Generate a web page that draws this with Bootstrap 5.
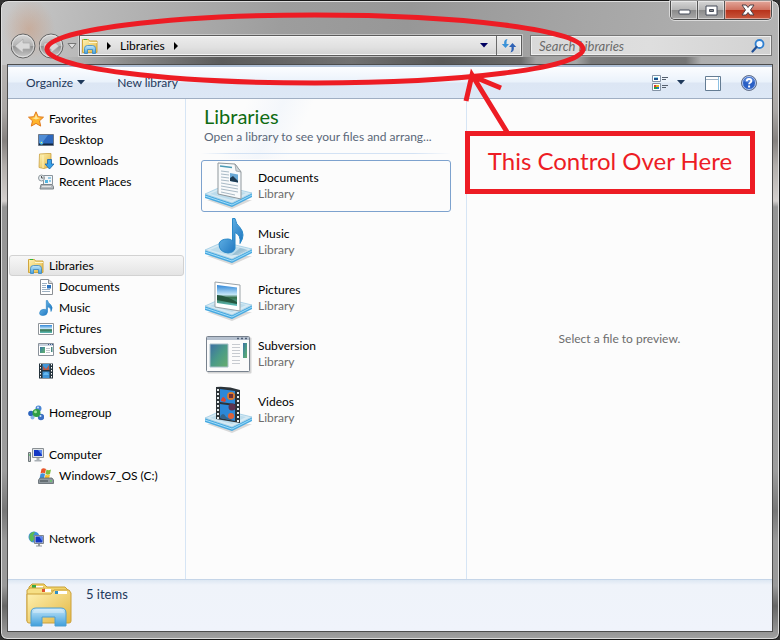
<!DOCTYPE html>
<html lang="en">
<head>
<meta charset="utf-8">
<meta name="viewport" content="width=device-width, initial-scale=1">
<title>Libraries</title>
<link href="https://cdn.jsdelivr.net/npm/bootstrap@5.3.0/dist/css/bootstrap.min.css" rel="stylesheet">
<style>
  body { font-family: Lato, "Open Sans", sans-serif; font-size: 12px; line-height: 16px; color: #000; background: #333; }
  button { font: inherit; border: 0; padding: 0; background: none; }
  .win { border: 1px solid #181818; border-radius: 8px 8px 7px 7px; padding: 0 6px 7px 6px;
    box-shadow: inset 0 0 0 1px #dedede;
    background:
      radial-gradient(ellipse 26px 30px at 28px 28px, rgba(205,140,100,.4), transparent),
      linear-gradient(to right, transparent 60px, rgba(60,60,60,.35) 130px, rgba(60,60,60,.7) 220px, rgba(80,80,80,.55) 350px, rgba(60,60,60,.7) 440px, rgba(70,70,70,.6) 520px, transparent 535px, transparent 575px, rgba(90,90,90,.6) 590px, rgba(80,80,80,.6) 685px, transparent 700px) 0 56px / 100% 8px no-repeat,
      linear-gradient(100deg, #c9c9c9 0, #b8b8b8 12%, #9d9d9d 36%, #979797 52%, #a6a6a6 75%, #b4b4b4 100%) 0 0 / 100% 64px no-repeat,
      linear-gradient(#b8b5b3 64px, #aaa7a5 110px, #85817f 140px, #b2aeab 165px, #d3cfcd 200px, #959595 206px, #9d9d9d 470px, #777 510px, #9a9a9a 540px, #9a9a9a 585px, #666 605px, #a2a2a2 100%); }
  .titlebar { height: 34px; padding-right: 1px; }
  .capbtns { height: 19px; border: 1px solid #4a4a4a; border-top: 0; border-radius: 0 0 5px 5px; overflow: hidden; box-shadow: 0 0 0 1px rgba(255,255,255,.55); }
  .capbtn { display: flex; align-items: center; justify-content: center; width: 27px; height: 18px;
    background: linear-gradient(#d5d5d5, #b5b5b5 48%, #8b8b8b 52%, #a9a9a9); border-right: 1px solid #555; box-shadow: inset 0 0 0 1px rgba(255,255,255,.45); }
  .capbtn.closebtn { width: 46px; border-right: 0; background: linear-gradient(#e3a79b, #cf7362 48%, #b8331b 52%, #c9583e); }
  .addrrow { height: 21px; margin-bottom: 8px; }
  .arrowbtn { width: 28px; height: 28px; }
  .histbtn { width: 12px; }
  .addr { height: 21px; border: 1px solid #5c5c5c; background: linear-gradient(#ececec, #e0e0e0 60%, #d2d2d2); box-shadow: inset 0 0 0 1px #f6f6f6, 0 0 0 1px rgba(230,230,230,.5); padding-left: 2px; }
  .refresh { width: 25px; height: 19px; border-left: 1px solid #6a6a6a; }
  .searchbox { width: 242px; height: 21px; border: 1px solid #777; background: linear-gradient(90deg, #d9d9d9, #dedede 50%, #d2d2d2); box-shadow: inset 0 0 0 1px #efefef; padding: 0 6px 0 8px; margin-right: 1px; }
  .searchbox input { min-width: 0; border: 0; outline: 0; padding: 0; background: none; font-size: 13px; font-style: italic; color: #555; line-height: 16px; }
  .searchbox input::placeholder { color: #6b6b6b; opacity: 1; }
  .client { border: 1px solid #4d4d4d; background: #fcfcfc; }
  .cmdbar { height: 34px; border-bottom: 1px solid #a0afc3; border-top: 2px solid #aebfd6; padding: 0 15px 0 18px;
    background: linear-gradient(#fcfdff, #eaf2fb 48%, #dce6f4 52%, #dde8f6); }
  .cmdbar button { color: #1e395b; }
  .treepane { width: 178px; flex: none; border-right: 1px solid #d6e5f5; padding: 9px 1px 0 1px; }
  .tree { display: flex; align-items: center; gap: 5px; height: 21px; padding: 0 0 0 18px; border: 1px solid transparent; color: #000; text-decoration: none; white-space: nowrap; }
  .tree.kid { padding-left: 28px; }
  .tree.active { border-color: #d2d2d2; border-radius: 3px; background: linear-gradient(#f7f7f7, #e4e4e4); }
  .gap1 { margin-bottom: 21px; }
  .gap2 { margin-bottom: 42px; }
  .gap3 { margin-bottom: 63px; }
  .listpane { width: 281px; flex: none; border-right: 1px solid #d6e5f5; padding: 5px 15px 0 15px;
    background: linear-gradient(115deg, transparent 20%, rgba(225,235,250,.3) 32%, transparent 42%) 0 0 / 100% 60px no-repeat; }
  .listpane h1 { font-size: 20px; line-height: 24px; font-weight: 400; color: #0f6b12; margin: 0 3px; }
  .subline { color: #5a6779; line-height: 18px; margin: 0 3px; padding-bottom: 7px; }
  .rule { height: 1px; margin-bottom: 6px; background: linear-gradient(90deg, transparent, #d3e2f4 12%, #d3e2f4 85%, transparent); }
  .lib { display: flex; align-items: center; gap: 5px; height: 52px; padding-left: 3px; border: 1px solid transparent; border-radius: 3px; color: #000; text-decoration: none; }
  .lib.focused { border-color: #7da2ce; }
  .lib small { display: block; font-size: 12px; color: #6d6d6d; }
  .preview { color: #6d6d6d; }
  .details { height: 52px; border-top: 1px solid #c5d5e8; background: linear-gradient(#dde7f3, #eff3fa 5px, #f0f3fb); color: #1e395b; padding: 0 0 0 18px; gap: 14px; }
  .details span { font-size: 13px; padding-top: 6px; }
  .overlay { position: absolute; left: 0; top: 0; pointer-events: none; }
  .callout { position: absolute; left: 465px; top: 131px; width: 290px; height: 63px; padding-bottom: 4px; border: 5px solid #ed1c24; background: #fcfcfc; color: #ed1c24; font-size: 24px; line-height: 28px; white-space: nowrap; }
</style>
</head>
<body class="position-relative">
<svg width="0" height="0" class="position-absolute" aria-hidden="true">
  <defs>
    <linearGradient id="gold" x1="0" y1="0" x2="1" y2="1"><stop offset="0" stop-color="#fff3b4"/><stop offset="1" stop-color="#e3b643"/></linearGradient>
    <linearGradient id="blue" x1="0" y1="0" x2="0" y2="1"><stop offset="0" stop-color="#c5e7fa"/><stop offset="1" stop-color="#3f9fdc"/></linearGradient>
    <linearGradient id="note" x1="0" y1="0" x2="1" y2="1"><stop offset="0" stop-color="#7fcbf5"/><stop offset="1" stop-color="#0d66b5"/></linearGradient>
    <linearGradient id="orb" x1="0" y1="0" x2="0" y2="1"><stop offset="0" stop-color="#d8d8d8"/><stop offset=".5" stop-color="#b1b1b1"/><stop offset=".52" stop-color="#929292"/><stop offset="1" stop-color="#cdcdcd"/></linearGradient>
    <linearGradient id="land" x1="0" y1="0" x2="0" y2="1"><stop offset="0" stop-color="#2f86d8"/><stop offset=".45" stop-color="#c3e5f7"/><stop offset=".6" stop-color="#35704a"/><stop offset="1" stop-color="#5fc0bf"/></linearGradient>
    <linearGradient id="field" x1="0" y1="0" x2="1" y2="1"><stop offset="0" stop-color="#3c6ea5"/><stop offset=".5" stop-color="#4a9a88"/><stop offset="1" stop-color="#68ae6c"/></linearGradient>
    <symbol id="i-lib" viewBox="0 0 16 16"><path d="M.5 1.500h6l1 1.500h7.500v11.500H.5z" fill="url(#gold)" stroke="#d0a63d"/><path d="M2 1.500h3" stroke="#35b435"/><path d="M7 4.500h8" stroke="#fff7d0"/><path d="M2.500 15.500v-5q0-3 3-3h5q3 0 3 3v5h-3v-4h-5v4z" fill="url(#blue)" stroke="#3787c4" stroke-width=".8"/></symbol>
    <symbol id="i-stand" viewBox="0 0 48 48"><path d="M2 38l25 9 20-9z" fill="#888" opacity=".3"/><path d="M0 32v4l27 9 20-10v-4L27 41z" fill="#48a9e0"/><path d="M0 34l27 9 20-10" stroke="#9fdcf9" fill="none"/><path d="M0 32l18-8 29 7-20 10z" fill="#d5e9f3" stroke="#9ccae3" stroke-width=".8"/><path d="M5 32l14-6 22 5-14 7z" fill="#bcdcec"/></symbol>
  </defs>
</svg>

<div class="win min-vh-100 d-flex flex-column">
  <header>
    <div class="titlebar d-flex justify-content-end">
      <div class="capbtns d-flex">
        <button class="capbtn" aria-label="Minimize"><svg width="13" height="10"><rect x="1" y="5" width="11" height="4" rx="1" fill="#fff" stroke="#444b59"/></svg></button>
        <button class="capbtn" aria-label="Maximize"><svg width="13" height="11"><path d="M1 1h11v9H1zM4.500 4.500v2h4v-2z" fill="#fff" stroke="#444b59" fill-rule="evenodd"/></svg></button>
        <button class="capbtn closebtn" aria-label="Close"><svg width="14" height="12"><path d="M1 1h4l2 2.500L9 1h4L9.500 6l3.500 5H9L7 8.500 5 11H1l3.500-5z" fill="#fff" stroke="#4c4047"/></svg></button>
      </div>
    </div>
    <div class="addrrow d-flex align-items-center">
      <div class="d-flex align-items-center ps-1">
        <button class="arrowbtn" aria-label="Back"><svg class="d-block" width="28" height="28"><circle cx="12" cy="14" r="12" fill="url(#orb)" stroke="#666"/><circle cx="12" cy="14" r="10.800" fill="none" stroke="#eee" opacity=".7"/><path d="M4 14l8-7v4h7v6h-7v4z" fill="#d9d9d9" stroke="#aaa" stroke-width=".7"/></svg></button>
        <button class="arrowbtn" aria-label="Forward"><svg class="d-block" width="28" height="28"><circle cx="12" cy="14" r="12" fill="url(#orb)" stroke="#666"/><circle cx="12" cy="14" r="10.800" fill="none" stroke="#eee" opacity=".7"/><path d="M20 14l-8-7v4H5v6h7v4z" fill="#d9d9d9" stroke="#aaa" stroke-width=".7"/></svg></button>
        <button class="histbtn d-flex" aria-label="Recent pages"><svg width="10" height="6"><path d="M1 .5h8L5 5.500z" fill="#ddd" stroke="#777"/></svg></button>
      </div>
      <div class="addr d-flex align-items-center flex-grow-1">
        <svg width="16" height="16"><use href="#i-lib"/></svg>
        <svg class="ms-2" width="6" height="8"><path d="M1 0l4 4-4 4z"/></svg>
        <button class="ms-2">Libraries</button>
        <svg class="ms-2" width="6" height="8"><path d="M1 0l4 4-4 4z"/></svg>
        <button class="ms-auto me-1 pe-1 d-flex" aria-label="Previous locations"><svg width="8" height="5"><path d="M0 0h8L4 4.500z" fill="#000060"/></svg></button>
        <button class="refresh d-flex align-items-center justify-content-center" aria-label="Refresh"><svg width="16" height="15"><path d="M6.500 1Q2.500 1.500 3.200 6H.8l3.700 4L8 6H5.500Q5 3 6.500 1z" fill="#3a92d8"/><path d="M9.500 14.500q4-1 3.300-5.500h2.400l-3.700-4L8 9h2.500q.5 3-1 5.500z" fill="#2e62b5"/></svg></button>
      </div>
      <label class="searchbox d-flex align-items-center ms-2">
        <input class="flex-grow-1" type="text" placeholder="Search Libraries" aria-label="Search Libraries">
        <svg width="14" height="14"><circle cx="8.500" cy="5" r="4" fill="#eef6ff" stroke="#2e7fd0" stroke-width="1.800"/><path d="M5.500 8L1.500 12.500" stroke="#204f95" stroke-width="2.200" stroke-linecap="round"/></svg>
      </label>
    </div>
  </header>

  <div class="client flex-grow-1 d-flex flex-column">
    <div class="cmdbar d-flex align-items-center">
      <button class="d-flex align-items-center gap-1">Organize <svg width="8" height="5"><path d="M0 0h8L4 4.500z" fill="#1e395b"/></svg></button>
      <button class="ms-4 ps-2">New library</button>
      <button class="ms-auto" aria-label="Change view"><svg width="17" height="16"><g fill="#fff" stroke="#8493a5"><path d="M.5.500h8v6h-8zM.5 8.500h8v7h-8z"/></g><path d="M2 3h4v2H2z" fill="#1c4f8a"/><path d="M2 2h4v1H2z" fill="#8dd8ee"/><path d="M2 10h2v2H2z" fill="#d33"/><path d="M4 10h3v2H4z" fill="#e6b31d"/><path d="M2 12h3v2H2z" fill="#2a9d45"/><path d="M5 12h2v2H5z" fill="#27c"/><path d="M10 2.500h6M10 4.500h4M10 10.500h6M10 12.500h4" stroke="#55606e"/></svg></button>
      <button class="ms-2 d-flex" aria-label="More views"><svg width="8" height="5"><path d="M0 0h8L4 4.500z" fill="#1e395b"/></svg></button>
      <button class="ms-3 ps-1" aria-label="Preview pane"><svg width="16" height="15" viewBox="0 0 16 15"><path d="M.5.500h15v14H.5z" fill="#fff" stroke="#647c93"/><path d="M1 3.500h12" stroke="#a3b4c4"/><path d="M13.500 1v13" stroke="#8cc0e2"/></svg></button>
      <button class="ms-3 ps-1" aria-label="Help"><svg width="16" height="16"><circle cx="8" cy="8" r="7.500" fill="#2a5fc5" stroke="#6a7488"/><circle cx="8" cy="8" r="6.500" fill="none" stroke="#b8cbee"/><path d="M3 6q1-3.500 5-3.500T13 6q-5 3-10 0z" fill="#7ea6ea" opacity=".6"/><path d="M5.800 6.300q0-2.300 2.300-2.300t2.200 2q0 1-1.200 1.800-1 .6-1 1.500" fill="none" stroke="#fff" stroke-width="1.800"/><path d="M7.100 10.500h2v2h-2z" fill="#fff"/></svg></button>
    </div>

    <div class="d-flex flex-grow-1">
      <nav class="treepane" aria-label="Folders">
        <a class="tree" href="#"><svg width="16" height="16"><path d="M8 .8l2.200 4.900 5.300.5-4 3.600 1.200 5.300L8 12.400l-4.700 2.700 1.200-5.300-4-3.600 5.300-.5z" fill="#ffb52c" stroke="#e07a1f"/><path d="M8 3l1.300 3.600 3 .3-4.300 1.600-4-1.600 2.800-.3z" fill="#ffe79a"/></svg>Favorites</a>
        <a class="tree kid" href="#"><svg width="16" height="16"><path d="M.5 2.500h15v11H.5z" fill="#2d68bd" stroke="#6c7787"/><path d="M1 3h9L4 11H1z" fill="#5f9de0" opacity=".7"/><path d="M1 11.500h14V13H1z" fill="#14283f"/><circle cx="3.500" cy="11" r="1.800" fill="#4fb8e6"/><path d="M3 10h1v1H3z" fill="#fe6"/></svg>Desktop</a>
        <a class="tree kid" href="#"><svg width="16" height="16"><path d="M1.500 1L9 .5h4v13L6 15.500l-5-1z" fill="url(#gold)" stroke="#caa142" stroke-width=".8"/><path d="M5 2v13" stroke="#fff4bd"/><path d="M9.500 6.500h4V11H16l-4.500 5L7 11h2.500z" fill="#38a0e8" stroke="#1c65a8" stroke-width=".8"/></svg>Downloads</a>
        <a class="tree kid" href="#"><svg width="16" height="16"><path d="M5.500 1.500h9v9h-9z" fill="#f3f6f8" stroke="#8a949c"/><path d="M7 6h3v3H7z" fill="#51b4df"/><path d="M10 4h3M11 7h2" stroke="#379bd0"/><path d="M3 10.500h11l1.500 2V15H2z" fill="#b4b9bd" stroke="#7d8489"/><path d="M4 12.500h9" stroke="#e4e4e4"/><circle cx="3.500" cy="4" r="3" fill="#e7edf0" stroke="#919a9f"/><path d="M3.500 2v2h2" fill="none" stroke="#555"/></svg>Recent Places</a>
        <div class="gap3"></div>
        <a class="tree active" href="#" aria-current="page"><svg width="16" height="16"><use href="#i-lib"/></svg>Libraries</a>
        <a class="tree kid" href="#"><svg width="16" height="16"><path d="M2.500.500h8l4 3.500v11.500h-12z" fill="#fff" stroke="#8b8f94"/><path d="M10.500.500v4h4" fill="#ddd" stroke="#8b8f94"/><path d="M4 4.500h5M4 6.500h4M4 8.500h4M4 10.500h8M4 12.500h8" stroke="#9cb0c2"/><path d="M9 6h4v3.500H9z" fill="#2a73c0"/></svg>Documents</a>
        <a class="tree kid" href="#"><svg width="16" height="16"><path d="M8.300.500h1.200Q10 3 12.500 4.500q3 3 .5 7 .6-3.500-3.500-5V12Q9 15.500 5 15.500t-3.300-3Q2 9.500 6 9.300q1.300 0 2.300.4z" fill="url(#note)" stroke="#2180c4" stroke-width=".6"/></svg>Music</a>
        <a class="tree kid" href="#"><svg width="16" height="16"><path d="M.5 2.500h15v11H.5z" fill="#fff" stroke="#8f9499"/><path d="M2 4h12v8H2z" fill="url(#land)"/></svg>Pictures</a>
        <a class="tree kid" href="#"><svg width="16" height="16"><path d="M.5 1.500h15v12H.5z" fill="#fff" stroke="#8b929b"/><path d="M1 2h14v2H1z" fill="#c9d2de"/><path d="M10 2.500h5" stroke="#35588b" stroke-dasharray="1 1"/><path d="M2 5h5v6H2z" fill="url(#field)"/><path d="M8 6.500h4M8 8.500h4M8 10.500h4" stroke="#c3c8ce"/><path d="M13 5h1.500v5H13z" fill="#4b8a80"/></svg>Subversion</a>
        <a class="tree kid" href="#"><svg width="16" height="16"><path d="M1 .5h14v15H1z" fill="#25333c"/><path d="M4.500 1h7v6h-7zM4.500 8.500h7v6.500h-7z" fill="#3f95d8"/><path d="M5 3l3 3 3-4v5H5z" fill="#b85a48"/><path d="M5 12q3-6 6 0z" fill="#64b8ef"/><path d="M2.500 1v14M13.500 1v14" stroke="#fff" stroke-dasharray="1.500 1.500"/></svg>Videos</a>
        <div class="gap1"></div>
        <a class="tree" href="#"><svg width="16" height="16"><circle cx="10.500" cy="3.500" r="3" fill="#4a86d4"/><circle cx="3" cy="8.500" r="2.800" fill="#2b64bd"/><circle cx="13" cy="12" r="3.200" fill="#3c6fc2"/><circle cx="4.500" cy="12.500" r="2" fill="#88b4e8"/><circle cx="8.500" cy="8" r="4" fill="#2f9d45"/><circle cx="7.500" cy="6.700" r="1.500" fill="#9fe39b"/><circle cx="10" cy="2.600" r="1" fill="#cfe4fb"/><circle cx="12.500" cy="11" r="1" fill="#cfe4fb"/></svg>Homegroup</a>
        <div class="gap1"></div>
        <a class="tree" href="#"><svg width="16" height="16"><path d="M.5 5.500h2v9h-2z" fill="#c3c8ca" stroke="#6d7679"/><path d="M1 8h1.500" stroke="#3b4"/><path d="M4.500 1.500h11v9h-11z" fill="#dfe3e6" stroke="#8a9094"/><path d="M6 3h8v6H6z" fill="#1438c4"/><path d="M10 3h4v5z" fill="#5a86ee"/><path d="M8.500 11h3v2h2v1.500h-7V13h2z" fill="#a9b0b5"/></svg>Computer</a>
        <a class="tree kid" href="#"><svg width="16" height="16"><path d="M3.500 1q2-1.500 4.500 0L7 5.500q-2-1.500-4.500 0z" fill="#e8562b"/><path d="M8.500 1.500q2 1.500 4.500 0L12 6q-2 1.500-4.500 0z" fill="#7dbb3a"/><path d="M2.500 6q2-1.500 4.500 0l-1 4.500q-2-1-4.500 0z" fill="#3e8fdc"/><path d="M7.500 6.500q2 1.500 4.500 0l-1 4.500H6.500z" fill="#fbc02d"/><path d="M2 10h12l1.500 2v3.500H.5V12z" fill="#8f989e" stroke="#5c656b" stroke-width=".8"/><path d="M2 13h8" stroke="#3d464b"/><path d="M12 13h2" stroke="#4de04d"/></svg>Windows7_OS (C:)</a>
        <div class="gap2"></div>
        <a class="tree" href="#"><svg width="16" height="16"><circle cx="6" cy="6" r="5.500" fill="#3c8fdd"/><path d="M2 3q3-3 5-2L5 5l2 2-3 4Q0 8 2 3z" fill="#5cba54"/><path d="M6.500 4.500h9v8h-9z" fill="#d6dade" stroke="#80878c"/><path d="M7.500 5.500h7v6h-7z" fill="#1438c4"/><path d="M11 5.500h3.500v5z" fill="#5a86ee"/><path d="M10 13h2v1.500h2v1H8v-1h2z" fill="#8f979d"/></svg>Network</a>
      </nav>

      <main class="listpane">
        <h1>Libraries</h1>
        <div class="subline text-truncate">Open a library to see your files and arrang...</div>
        <div class="rule"></div>
        <div class="d-flex flex-column gap-1">
          <a class="lib focused" href="#"><svg width="48" height="48"><use href="#i-stand"/><path d="M13 1l17 1 6 8v27L13 32z" fill="#f8fafb" stroke="#8f979c"/><path d="M30 2l1 7 5 1z" fill="#cfd6da" stroke="#8f979c" stroke-width=".7"/><path d="M15 4l12 1.500" stroke="#4a9ab5" stroke-width="1.500"/><path d="M16 9l8 1M16 12l8 1M16 15l8 1M16 18l8 1M16 21l17 3M16 24l17 3M16 27l17 3M16 30l14 3" stroke="#a9bac6"/><path d="M25 11l8 1.500v8L25 19z" fill="#6aa9d6"/><path d="M25 16l3-2 5 5v1.500L25 19z" fill="#1e3a50"/></svg><span>Documents<small>Library</small></span></a>
          <a class="lib" href="#"><svg width="48" height="48"><use href="#i-stand"/><path d="M27 37l8-7 8 2-10 5z" fill="#7aa6be" opacity=".5"/><path d="M27.500.500h2.500q1 6 5 9 6 7 0 16 1-9-5-11v16q-1 4-7 4.500-9-1-9-9 1-5 9-5 3 0 4.500 2z" fill="url(#note)" stroke="#2888c8"/></svg><span>Music<small>Library</small></span></a>
          <a class="lib" href="#"><svg width="48" height="48"><use href="#i-stand"/><path d="M10 8l25 3v26L10 33z" fill="#fff" stroke="#9ba3a8"/><path d="M12 11l20 2.500V32L12 29z" fill="url(#land)"/><path d="M12 21q10 1 20 7v2L12 26z" fill="#25583f"/></svg><span>Pictures<small>Library</small></span></a>
          <a class="lib" href="#"><svg width="48" height="48"><rect x="2.500" y="7.500" width="44" height="36" rx="1" fill="#777" opacity=".3"/><rect x="1.500" y="6.500" width="43" height="35" rx="1" fill="#fbfbfb" stroke="#78828e"/><path d="M2 7h42v3H2z" fill="#b6c1cf"/><path d="M32 8.500h10" stroke="#506078" stroke-width="1.500" stroke-dasharray="2 2"/><path d="M5 14h18v23H5z" fill="url(#field)" stroke="#a8bfc9"/><path d="M27 14.500h8M27 17.500h8M27 20.500h8M27 23.500h8M27 26.500h8M27 30.500h8M27 33.500h8" stroke="#c7cbd0"/><path d="M38 13h4v15h-4z" fill="url(#field)"/></svg><span>Subversion<small>Library</small></span></a>
          <a class="lib" href="#"><svg width="48" height="48"><use href="#i-stand"/><path d="M11 1q12-1 24 3v33L11 33z" fill="#2c3338"/><path d="M15 3l15 2v13L15 16zM15 18l15 2v15l-15-3z" fill="#2c88d8"/><path d="M16 14q2-6 5 0l-1 2-4-1z" fill="#d6452f"/><circle cx="26" cy="10" r="4" fill="#d9792e"/><path d="M24 8h4v4h-4z" fill="#6c2f3c"/><circle cx="27" cy="21" r="3.500" fill="#5d3350"/><path d="M15 31q3-6 6 0l9 4-15-3z" fill="#35648b"/><circle cx="26" cy="30" r="3" fill="#e0623a"/><path d="M13 3v30M33 6v30" stroke="#e8eef0" stroke-width="2" stroke-dasharray="2 2"/></svg><span>Videos<small>Library</small></span></a>
        </div>
      </main>

      <section class="preview flex-grow-1 d-flex align-items-center justify-content-center" aria-label="Preview">Select a file to preview.</section>
    </div>

    <footer class="details d-flex">
      <svg width="46" height="48" viewBox="0 0 46 48"><path d="M3 7l3-3h12l3 3h18l3 3v31H3z" fill="#f0d269" stroke="#c9a13a"/><path d="M6 5h4v3H6z" fill="#34a844"/><path d="M10 6h7v3h-7z" fill="#fff"/><path d="M1 10l3-2h14l2 3h14v30H1z" fill="#f6df85" stroke="#c9a13a"/><path d="M16 9h3v3h-3z" fill="#e2542c"/><path d="M19 9h6v3h-6z" fill="#fff"/><path d="M1 14h24l3-4h15l2 3v28q0 2-2 2H3q-2 0-2-2z" fill="url(#gold)" stroke="#cba03a"/><path d="M29 11h3v3h-3z" fill="#2f8fc4"/><path d="M32 11h9v3h-9z" fill="#fff"/><path d="M5 46V33q0-5 5-5h25q5 0 5 5v13H29v-9H16v9H5z" fill="url(#blue)" stroke="#4d9ed2"/><path d="M7 33q0-4 5-4h21q5 0 5 4z" fill="#fff" opacity=".3"/></svg>
      <span>5 items</span>
    </footer>
  </div>
</div>

<svg class="overlay" width="780" height="200" fill="none" stroke="#ed1c24" stroke-width="5" aria-hidden="true">
  <ellipse cx="315" cy="49" rx="268" ry="34"/>
  <path d="M507 132L472 75L466 101M472 76L501 88"/>
</svg>
<div class="callout d-flex align-items-center justify-content-center">This Control Over Here</div>
<script src="https://cdn.jsdelivr.net/npm/bootstrap@5.3.0/dist/js/bootstrap.bundle.min.js"></script>
</body>
</html>
